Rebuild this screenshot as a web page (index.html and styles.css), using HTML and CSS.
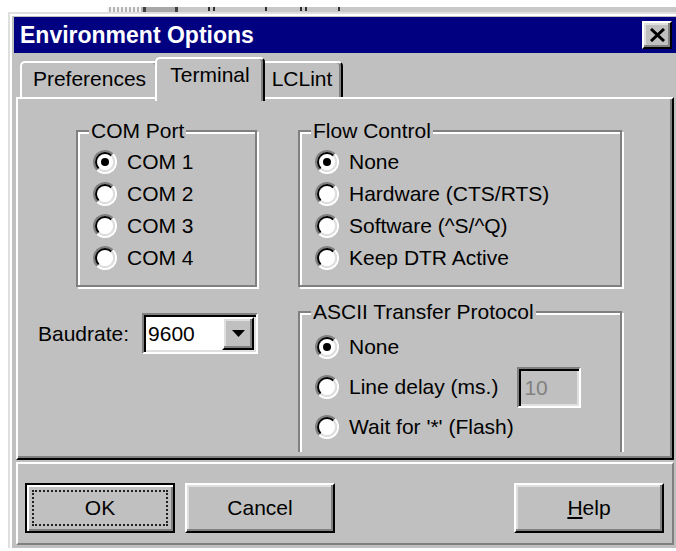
FILE: index.html
```html
<!DOCTYPE html>
<html lang="en">
<head>
<meta charset="utf-8">
<title>Environment Options</title>
<link rel="stylesheet" href="styles.css">
</head>
<body>
  <div class="backdrop">
    <span class="hatch"></span>
    <span class="rule"></span>
    <span class="key"></span>
    <span class="rule"></span>
    <span class="tick t1"></span>
    <span class="tick t2"></span>
    <span class="tick t3"></span>
    <span class="tick t4"></span>
    <span class="tick t5"></span>
    <span class="tick t6"></span>
  </div>

  <div class="dialog">
    <div class="titlebar">
      <span class="title">Environment Options</span>
      <button class="close" aria-label="Close">
        <svg width="17" height="14" viewBox="0 0 17 14"><path d="M2 1 L15 13 M15 1 L2 13" stroke="#000" stroke-width="3" fill="none"/></svg>
      </button>
    </div>

    <div class="tabs">
      <div class="tab tab-prefs">Preferences</div>
      <div class="tab tab-term active">Terminal</div>
      <div class="tab tab-lclint">LCLint</div>
    </div>

    <div class="panel">
      <div class="panel-in">
        <div class="sheet">
          <div class="col col-left">
            <fieldset class="group group-com">
              <legend>COM Port</legend>
              <label class="opt"><span class="radio on"><i></i></span>COM 1</label>
              <label class="opt"><span class="radio"><i></i></span>COM 2</label>
              <label class="opt"><span class="radio"><i></i></span>COM 3</label>
              <label class="opt"><span class="radio"><i></i></span>COM 4</label>
            </fieldset>
            <div class="baud">
              <span>Baudrate:</span>
              <div class="combo">
                <span class="combo-val">9600</span>
                <span class="combo-btn"><svg width="13" height="7" viewBox="0 0 13 7"><polygon points="0,0 13,0 6.5,7" fill="#000"/></svg></span>
              </div>
            </div>
          </div>

          <div class="col col-right">
            <fieldset class="group group-flow">
              <legend>Flow Control</legend>
              <label class="opt"><span class="radio on"><i></i></span>None</label>
              <label class="opt"><span class="radio"><i></i></span>Hardware (CTS/RTS)</label>
              <label class="opt"><span class="radio"><i></i></span>Software (^S/^Q)</label>
              <label class="opt"><span class="radio"><i></i></span>Keep DTR Active</label>
            </fieldset>
            <fieldset class="group group-ascii">
              <legend>ASCII Transfer Protocol</legend>
              <label class="opt"><span class="radio on"><i></i></span>None</label>
              <label class="opt"><span class="radio"><i></i></span>Line delay (ms.)<span class="edit">10</span></label>
              <label class="opt"><span class="radio"><i></i></span>Wait for '*' (Flash)</label>
            </fieldset>
          </div>
        </div>
      </div>
    </div>

    <div class="btnbar">
      <button class="btn btn-default"><span class="focus">OK</span></button>
      <button class="btn btn-cancel">Cancel</button>
      <button class="btn btn-help"><u>H</u>elp</button>
    </div>
  </div>
</body>
</html>
```

FILE: styles.css
```css
* { box-sizing: border-box; }

html, body { margin: 0; }

body {
  width: 676px;
  height: 551px;
  overflow: hidden;
  background: #fff;
  color: #000;
  font-family: "Liberation Sans", Arial, sans-serif;
  font-size: 21px;
  line-height: 24px;
}

/* strip of the window lying behind the dialog */
.backdrop {
  display: flex;
  height: 5px;
  margin: 7px 0 0 107px;
  background: #c8c8c8;
}
.backdrop .hatch {
  width: 36px;
  background: repeating-linear-gradient(90deg, #f4f4f4 0 2px, #b4b4b4 2px 4px);
}
.backdrop .rule { width: 3px; background: #404040; }
.backdrop .key { width: 29px; background: #a8a8a8; }
.backdrop .tick { width: 2px; height: 4px; background: #303030; }
.backdrop .t1 { margin-left: 30px; }
.backdrop .t2 { margin-left: 3px; }
.backdrop .t3 { margin-left: 50px; }
.backdrop .t4 { margin-left: 33px; }
.backdrop .t5 { margin-left: 3px; }
.backdrop .t6 { margin-left: 31px; }

/* dialog frame */
.dialog {
  width: 668px;
  margin-left: 8px;
  padding: 3px 0 3px 4px;
  border-top: 2px solid #dfdfdf;
  border-left: 2px solid #dfdfdf;
  box-shadow: inset 2px 2px 0 #fff;
  background: #c0c0c0;
}

.titlebar {
  display: flex;
  align-items: center;
  justify-content: space-between;
  height: 36px;
  padding: 0 4px 0 6px;
  background: #000080;
}
.title {
  color: #fff;
  font-weight: bold;
  font-size: 23px;
  line-height: 24px;
}
.close {
  display: flex;
  align-items: center;
  justify-content: center;
  width: 30px;
  height: 28px;
  padding: 0;
  border: 2px solid;
  border-color: #fff #000 #000 #fff;
  box-shadow: inset -2px -2px 0 #808080, inset 2px 2px 0 #dfdfdf;
  background: #c0c0c0;
}

/* tab strip */
.tabs {
  display: flex;
  align-items: flex-end;
  height: 40px;
  margin-top: 4px;
  padding-left: 6px;
}
.tab {
  height: 36px;
  padding-top: 4px;
  border: 2px solid;
  border-bottom: 0;
  border-color: #fff #000 #000 #fff;
  border-radius: 5px 5px 0 0;
  box-shadow: inset -2px 0 0 #808080;
  background: #c0c0c0;
  text-align: center;
}
.tab-prefs { width: 139px; }
.tab-term { width: 102px; }
.tab-lclint { width: 82px; }
.tab.active {
  position: relative;
  z-index: 1;
  width: 110px;
  height: 44px;
  margin: 0 -4px -4px;
}

/* tab page */
.panel {
  width: 658px;
  margin-left: 2px;
  border: 2px solid;
  border-color: #fff #000 #000 #fff;
}
.panel-in {
  padding-bottom: 4px;
  border-right: 2px solid #808080;
  border-bottom: 2px solid #808080;
}
.sheet {
  display: flex;
  height: 353px;
  overflow: hidden;
  padding: 20px 0 0 20px;
}
.col-left { flex: none; width: 260px; }
.col-right { flex: none; width: 324px; }

/* etched group boxes */
.group {
  min-width: 0;
  margin: 0;
  padding: 3px 0 11px 15px;
  border: 2px solid #808080;
  box-shadow: inset 2px 2px 0 #fff, 2px 2px 0 #fff;
}
.group legend {
  margin-left: -4px;
  padding: 0 2px;
  line-height: 24px;
  background: #c0c0c0;
}
.group-com { width: 181px; margin-left: 38px; }
.group-flow { width: 324px; }
.group-ascii { width: 324px; height: 180px; margin-top: 13px; }

.opt {
  display: flex;
  align-items: center;
  gap: 10px;
  height: 32px;
  white-space: nowrap;
}
.group-ascii .opt { height: 40px; }

.radio {
  flex: none;
  width: 24px;
  height: 24px;
  border: 2px solid;
  border-color: #808080 #fff #fff #808080;
  border-radius: 50%;
}
.radio i {
  display: grid;
  place-items: center;
  width: 100%;
  height: 100%;
  border: 2px solid;
  border-color: #000 #dfdfdf #dfdfdf #000;
  border-radius: 50%;
  background: #fff;
}
.radio.on i::after {
  content: "";
  width: 8px;
  height: 8px;
  border-radius: 50%;
  background: #000;
}

/* sunken fields */
.combo,
.edit {
  border: 2px solid;
  border-color: #808080 #fff #fff #808080;
  box-shadow: inset 2px 2px 0 #000, inset -2px -2px 0 #dfdfdf;
}

.baud {
  display: flex;
  align-items: center;
  margin-top: 26px;
}
.combo {
  display: flex;
  align-items: center;
  width: 116px;
  height: 41px;
  margin-left: 13px;
  padding: 2px;
  background: #fff;
}
.combo-val { padding-left: 2px; }
.combo-btn {
  display: flex;
  align-items: center;
  justify-content: center;
  width: 32px;
  height: 33px;
  margin-left: auto;
  border: 2px solid;
  border-color: #fff #000 #000 #fff;
  box-shadow: inset -2px -2px 0 #808080, inset 2px 2px 0 #dfdfdf;
  background: #c0c0c0;
}

.edit {
  width: 64px;
  height: 41px;
  margin-left: 9px;
  padding-left: 5px;
  color: #808080;
  line-height: 37px;
  background: #c0c0c0;
}

/* button row */
.btnbar {
  display: flex;
  align-items: flex-start;
  width: 658px;
  height: 83px;
  margin: 2px 0 0 2px;
  padding: 19px 8px 0 7px;
  border: 2px solid;
  border-color: #fff #808080 #808080 #fff;
}
.btn {
  display: flex;
  align-items: center;
  justify-content: center;
  width: 150px;
  height: 50px;
  padding: 0;
  border: 2px solid;
  border-color: #fff #000 #000 #fff;
  box-shadow: inset -2px -2px 0 #808080, inset 2px 2px 0 #dfdfdf;
  background: #c0c0c0;
  color: #000;
  font: inherit;
}
.btn-default {
  padding: 5px;
  border-color: #000;
  box-shadow: inset 2px 2px 0 #fff, inset -2px -2px 0 #808080;
}
.focus {
  display: flex;
  align-items: center;
  justify-content: center;
  width: 100%;
  height: 100%;
  border: 2px dotted #222;
}
.btn-cancel { margin-left: 10px; }
.btn-help { margin-left: auto; }
.btn-help u { text-underline-offset: 2px; }
```
